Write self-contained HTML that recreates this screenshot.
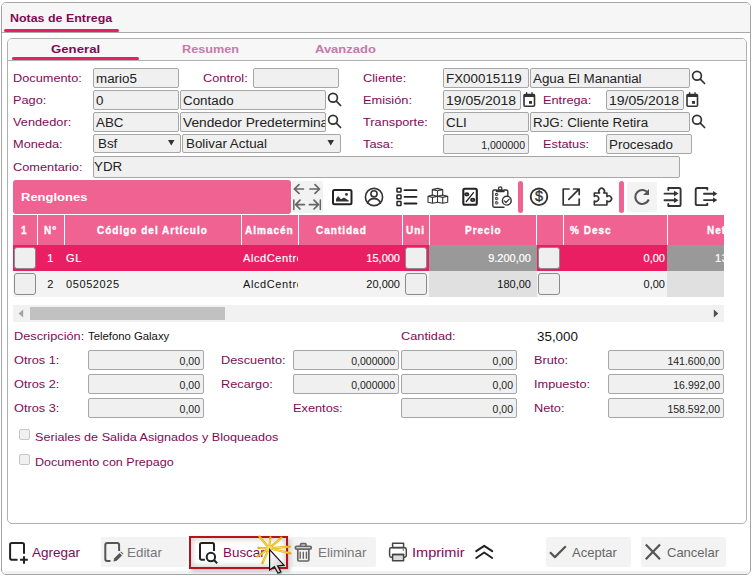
<!DOCTYPE html>
<html><head><meta charset="utf-8">
<style>
*{box-sizing:border-box;margin:0;padding:0}
html,body{width:754px;height:577px;overflow:hidden;background:#fff}
body{position:relative;font-family:"Liberation Sans",sans-serif;color:#222}
.a{position:absolute}
.lbl{position:absolute;font-size:11px;line-height:20px;height:20px;color:#7f0a55;white-space:nowrap;transform:scaleX(1.16);transform-origin:0 0}
.inp{position:absolute;height:20px;border:1px solid #a6a6a6;border-radius:2px;background:#f0f0f0;font-size:12.5px;line-height:20px;padding-left:2px;color:#222;white-space:nowrap;overflow:hidden}
.num{text-align:right;padding-right:3px;font-size:10.5px}
.inp i{font-style:normal;display:inline-block;transform:scaleX(1.07);transform-origin:0 0}
.ico{position:absolute;overflow:visible}
.th{position:absolute;top:223px;font-size:10px;font-weight:bold;color:#fff;line-height:16px;white-space:nowrap;letter-spacing:1px;-webkit-text-stroke:.35px #fff}
.cb{position:absolute;width:22px;height:22px;border:1px solid #8a8a8a;border-radius:3px;background:#efefef}
.td{position:absolute;height:26px;line-height:26px;font-size:11px;color:#111;white-space:nowrap;letter-spacing:.6px}
.td.w{color:#fff;-webkit-text-stroke:.2px #fff}
.btxt{position:absolute;top:544px;font-size:13px;line-height:18px;white-space:nowrap;transform-origin:0 0}
</style></head><body>

<!-- outer panel -->
<div class="a" style="left:1px;top:2px;width:750px;height:573px;border:1px solid #a4a4a4;border-radius:5px;background:#fff;overflow:hidden">
  <div class="a" style="left:0;top:0;width:748px;height:30px;background:#f6f6f6;border-bottom:1px solid #a9a9a9"></div>
  <div class="a" style="left:2px;top:26px;width:115px;height:3px;background:#e91e63;border-radius:2px"></div>
  <div class="a" style="left:0;top:568px;width:748px;height:4px;background:#eff3f6"></div>
</div>
<div class="a" style="left:10px;top:10px;font-size:11px;font-weight:bold;color:#7f0a55;line-height:16px;transform:scaleX(1.13);transform-origin:0 0">Notas de Entrega</div>

<!-- inner panel -->
<div class="a" style="left:7px;top:38px;width:740px;height:486px;border:1px solid #b0b0b0;border-radius:5px;background:#fff;overflow:hidden">
  <div class="a" style="left:0;top:0;width:738px;height:22px;background:#f7f7f7;border-bottom:1px solid #b0b0b0"></div>
  <div class="a" style="left:4px;top:18px;width:127px;height:3px;background:#e91e63;border-radius:2px"></div>
</div>
<div class="a" style="left:51px;top:41px;font-size:11px;font-weight:bold;color:#7f0a55;line-height:16px;transform:scaleX(1.2);transform-origin:0 0">General</div>
<div class="a" style="left:182px;top:41px;font-size:11px;font-weight:bold;color:#c878aa;line-height:16px;transform:scaleX(1.15);transform-origin:0 0">Resumen</div>
<div class="a" style="left:315px;top:41px;font-size:11px;font-weight:bold;color:#c878aa;line-height:16px;transform:scaleX(1.18);transform-origin:0 0">Avanzado</div>

<!-- form row 1 -->
<div class="lbl" style="left:13px;top:68px">Documento:</div>
<div class="inp" style="left:93px;top:68px;width:86px"><i>mario5</i></div>
<div class="lbl" style="left:203px;top:68px">Control:</div>
<div class="inp" style="left:253px;top:68px;width:86px"></div>
<div class="lbl" style="left:363px;top:68px">Cliente:</div>
<div class="inp" style="left:443px;top:68px;width:86px"><i>FX00015119</i></div>
<div class="inp" style="left:530px;top:68px;width:160px"><i>Agua El Manantial</i></div>

<!-- row 2 -->
<div class="lbl" style="left:13px;top:90px">Pago:</div>
<div class="inp" style="left:93px;top:90px;width:86px"><i>0</i></div>
<div class="inp" style="left:180px;top:90px;width:146px"><i>Contado</i></div>
<div class="lbl" style="left:363px;top:90px">Emisión:</div>
<div class="inp" style="left:443px;top:90px;width:78px"><i style="transform:scaleX(1.12)">19/05/2018</i></div>
<div class="lbl" style="left:543px;top:90px">Entrega:</div>
<div class="inp" style="left:606px;top:90px;width:78px"><i style="transform:scaleX(1.12)">19/05/2018</i></div>

<!-- row 3 -->
<div class="lbl" style="left:13px;top:112px">Vendedor:</div>
<div class="inp" style="left:93px;top:112px;width:86px"><i>ABC</i></div>
<div class="inp" style="left:180px;top:112px;width:146px"><i style="transform:scaleX(1.1)">Vendedor Predetermina</i></div>
<div class="lbl" style="left:363px;top:112px">Transporte:</div>
<div class="inp" style="left:443px;top:112px;width:86px"><i>CLI</i></div>
<div class="inp" style="left:530px;top:112px;width:160px"><i>RJG: Cliente Retira</i></div>

<!-- row 4 -->
<div class="lbl" style="left:13px;top:134px">Moneda:</div>
<div class="inp" style="left:93px;top:134px;width:88px;height:19px;line-height:18px;padding-left:4px"><i>Bsf</i></div>
<div class="inp" style="left:182px;top:134px;width:159px;height:19px;line-height:18px;padding-left:3px"><i>Bolivar Actual</i></div>
<div class="lbl" style="left:363px;top:134px">Tasa:</div>
<div class="inp num" style="left:443px;top:134px;width:86px">1,000000</div>
<div class="lbl" style="left:543px;top:134px">Estatus:</div>
<div class="inp" style="left:606px;top:134px;width:86px"><i>Procesado</i></div>

<!-- row 5 -->
<div class="lbl" style="left:13px;top:157px">Comentario:</div>
<div class="inp" style="left:93px;top:156px;width:587px;height:22px;line-height:20px;padding-left:0"><i>YDR</i></div>


<!-- renglones bar -->
<div class="a" style="left:13px;top:180px;width:278px;height:34px;background:#f06292;border-radius:3px"></div>
<div class="a" style="left:21px;top:189px;font-size:11.5px;font-weight:bold;color:#fff;line-height:16px;transform:scaleX(1.13);transform-origin:0 0">Renglones</div>

<!-- header row -->
<div class="a" style="left:13px;top:215px;width:711px;height:30px;background:#f06292"></div>
<div class="a" style="left:13px;top:245px;width:711px;height:26px;background:#e91e63"></div>
<div class="a" style="left:13px;top:271px;width:711px;height:26px;background:#f3f3f3"></div>
<div class="a" style="left:429px;top:245px;width:108px;height:26px;background:#999"></div>
<div class="a" style="left:667px;top:245px;width:57px;height:26px;background:#999"></div>
<div class="a" style="left:429px;top:271px;width:108px;height:26px;background:#e0e0e0"></div>
<div class="a" style="left:667px;top:271px;width:57px;height:26px;background:#e0e0e0"></div>
<div class="a" style="left:37px;top:215px;width:1px;height:30px;background:#fff"></div>
<div class="a" style="left:64px;top:215px;width:1px;height:30px;background:#fff"></div>
<div class="a" style="left:241px;top:215px;width:1px;height:30px;background:#fff"></div>
<div class="a" style="left:298px;top:215px;width:1px;height:30px;background:#fff"></div>
<div class="a" style="left:402px;top:215px;width:1px;height:30px;background:#fff"></div>
<div class="a" style="left:429px;top:215px;width:1px;height:30px;background:#fff"></div>
<div class="a" style="left:536px;top:215px;width:1px;height:30px;background:#fff"></div>
<div class="a" style="left:563px;top:215px;width:1px;height:30px;background:#fff"></div>
<div class="a" style="left:667px;top:215px;width:1px;height:30px;background:#fff"></div>

<div class="th" style="left:21px">1</div>
<div class="th" style="left:44px">N°</div>
<div class="th" style="left:97px">Código del Artículo</div>
<div class="th" style="left:245px">Almacén</div>
<div class="th" style="left:316px">Cantidad</div>
<div class="th" style="left:406px">Uni</div>
<div class="th" style="left:465px">Precio</div>
<div class="th" style="left:570px">% Desc</div>
<div class="th" style="left:707px;width:17px;overflow:hidden">Neto</div>

<div class="cb" style="left:14px;top:247px"></div>
<div class="cb" style="left:14px;top:273px"></div>
<div class="cb" style="left:405px;top:247px"></div>
<div class="cb" style="left:405px;top:273px"></div>
<div class="cb" style="left:538px;top:247px"></div>
<div class="cb" style="left:538px;top:273px"></div>

<div class="td w" style="left:38px;top:245px;width:16px;text-align:right">1</div>
<div class="td w" style="left:66px;top:245px">GL</div>
<div class="td w" style="left:243px;top:245px;width:55px;overflow:hidden">AlcdCentro</div>
<div class="td w" style="left:340px;top:245px;width:60px;text-align:right;letter-spacing:0">15,000</div>
<div class="td w" style="left:470px;top:245px;width:61px;text-align:right;letter-spacing:0">9.200,00</div>
<div class="td w" style="left:600px;top:245px;width:65px;text-align:right;letter-spacing:0">0,00</div>
<div class="td w" style="left:715px;top:245px;width:9px;overflow:hidden">13</div>

<div class="td" style="left:38px;top:271px;width:16px;text-align:right">2</div>
<div class="td" style="left:66px;top:271px">05052025</div>
<div class="td" style="left:243px;top:271px;width:55px;overflow:hidden">AlcdCentro</div>
<div class="td" style="left:340px;top:271px;width:60px;text-align:right;letter-spacing:0">20,000</div>
<div class="td" style="left:470px;top:271px;width:61px;text-align:right;letter-spacing:0">180,00</div>
<div class="td" style="left:600px;top:271px;width:65px;text-align:right;letter-spacing:0">0,00</div>

<!-- scrollbar -->
<div class="a" style="left:13px;top:305px;width:711px;height:17px;background:#f1f1f1"></div>
<div class="a" style="left:30px;top:307px;width:195px;height:13px;background:#c1c1c1"></div>


<!-- bottom section -->
<div class="lbl" style="left:14px;top:326px">Descripción:</div>
<div class="lbl" style="left:88px;top:326px;color:#111;transform:scaleX(1.03)">Telefono Galaxy</div>
<div class="lbl" style="left:401px;top:326px">Cantidad:</div>
<div class="a" style="left:537px;top:327px;font-size:13px;line-height:20px;color:#111;transform:scaleX(1.03);transform-origin:0 0">35,000</div>

<div class="lbl" style="left:14px;top:350px">Otros 1:</div>
<div class="inp num" style="left:88px;top:350px;width:116px">0,00</div>
<div class="lbl" style="left:221px;top:350px">Descuento:</div>
<div class="inp num" style="left:293px;top:350px;width:106px">0,000000</div>
<div class="inp num" style="left:401px;top:350px;width:116px">0,00</div>
<div class="lbl" style="left:534px;top:350px">Bruto:</div>
<div class="inp num" style="left:608px;top:350px;width:116px">141.600,00</div>

<div class="lbl" style="left:14px;top:374px">Otros 2:</div>
<div class="inp num" style="left:88px;top:374px;width:116px">0,00</div>
<div class="lbl" style="left:221px;top:374px">Recargo:</div>
<div class="inp num" style="left:293px;top:374px;width:106px">0,000000</div>
<div class="inp num" style="left:401px;top:374px;width:116px">0,00</div>
<div class="lbl" style="left:534px;top:374px">Impuesto:</div>
<div class="inp num" style="left:608px;top:374px;width:116px">16.992,00</div>

<div class="lbl" style="left:14px;top:398px">Otros 3:</div>
<div class="inp num" style="left:88px;top:398px;width:116px">0,00</div>
<div class="lbl" style="left:293px;top:398px">Exentos:</div>
<div class="inp num" style="left:401px;top:398px;width:116px">0,00</div>
<div class="lbl" style="left:534px;top:398px">Neto:</div>
<div class="inp num" style="left:608px;top:398px;width:116px">158.592,00</div>

<div class="a" style="left:19px;top:429px;width:11px;height:11px;border:1px solid #c6c6c6;border-radius:2px;background:#f0f0f0"></div>
<div class="lbl" style="left:35px;top:427px;transform:scaleX(1.147)">Seriales de Salida Asignados y Bloqueados</div>
<div class="a" style="left:19px;top:454px;width:11px;height:11px;border:1px solid #c6c6c6;border-radius:2px;background:#f0f0f0"></div>
<div class="lbl" style="left:35px;top:452px;transform:scaleX(1.14)">Documento con Prepago</div>

<!-- footer buttons -->
<div class="a" style="left:101px;top:537px;width:86px;height:30px;background:#f3f3f3;border-radius:2px"></div>
<div class="a" style="left:291px;top:537px;width:85px;height:30px;background:#f3f3f3;border-radius:2px"></div>
<div class="a" style="left:546px;top:537px;width:85px;height:30px;background:#f3f3f3;border-radius:2px"></div>
<div class="a" style="left:641px;top:537px;width:85px;height:30px;background:#f3f3f3;border-radius:2px"></div>
<div class="a" style="left:189px;top:536px;width:99px;height:33px;border:2px solid #b5121b;box-shadow:inset 0 0 5px 2px rgba(0,0,0,.16), 2px 2px 4px rgba(0,0,0,.25)"></div>

<div class="btxt" style="left:32px;color:#7f0a55;transform:scaleX(1.04)">Agregar</div>
<div class="btxt" style="left:127px;color:#777;transform:scaleX(1.03)">Editar</div>
<div class="btxt" style="left:223px;color:#7f0a55;transform:scaleX(1.03)">Buscar</div>
<div class="btxt" style="left:318px;color:#777;transform:scaleX(1.03)">Eliminar</div>
<div class="btxt" style="left:412px;color:#7f0a55;transform:scaleX(1.12)">Imprimir</div>
<div class="btxt" style="left:572px;color:#666">Aceptar</div>
<div class="btxt" style="left:667px;color:#666">Cancelar</div>


<!-- icons overlay -->
<svg class="a" style="left:0;top:0" width="754" height="577" viewBox="0 0 754 577" fill="none" stroke-linecap="round" stroke-linejoin="round">
 <path d="M18.6,313.5 L23.2,309.6 V317.4 Z" fill="#a3a3a3"/>
 <path d="M718.3,313.5 L713.8,309.6 V317.4 Z" fill="#505050"/>
 <!-- select arrows -->
 <path d="M168,140 H174.5 L171.25,145.5 Z" fill="#333"/>
 <path d="M327.5,140 H334 L330.75,145.5 Z" fill="#333"/>
 <!-- search icons -->
 <g stroke="#333" stroke-width="1.7">
  <circle cx="333" cy="97.8" r="4.4"/><path d="M336.3,101.2 L340.6,105.5"/>
  <circle cx="333" cy="119.8" r="4.4"/><path d="M336.3,123.2 L340.6,127.5"/>
  <circle cx="697" cy="75.8" r="4.4"/><path d="M700.3,79.2 L704.6,83.5"/>
  <circle cx="697" cy="119.8" r="4.4"/><path d="M700.3,123.2 L704.6,127.5"/>
 </g>
 <!-- calendars -->
 <g>
  <rect x="524" y="94.5" width="10.5" height="11.8" rx="1" stroke="#333" stroke-width="1.6"/>
  <rect x="524" y="94.5" width="10.5" height="2.5" fill="#333"/>
  <path d="M526.6,92.8 V95 M532,92.8 V95" stroke="#333" stroke-width="1.4"/>
  <rect x="529" y="101" width="3" height="2.8" fill="#333"/>
  <rect x="687" y="94.5" width="10.5" height="11.8" rx="1" stroke="#333" stroke-width="1.6"/>
  <rect x="687" y="94.5" width="10.5" height="2.5" fill="#333"/>
  <path d="M689.6,92.8 V95 M695,92.8 V95" stroke="#333" stroke-width="1.4"/>
  <rect x="692" y="101" width="3" height="2.8" fill="#333"/>
 </g>

 <!-- toolbar: arrows box -->
 <rect x="292" y="181" width="31" height="32" rx="2" fill="#f2f2f2"/>
 <g stroke="#666" stroke-width="1.7">
  <path d="M294.3,189 H303.4 M299,184.6 L294.3,189 L299,193.4"/>
  <path d="M310,189 H319.5 M315,184.6 L319.5,189 L315,193.4"/>
  <path d="M293.8,200 V209.4" stroke-width="1.5"/>
  <path d="M295.6,204.6 H304.4 M300,200.2 L295.6,204.6 L300,209"/>
  <path d="M320.3,200 V209.4" stroke-width="1.5"/>
  <path d="M309.4,204.6 H318.5 M314,200.2 L318.5,204.6 L314,209"/>
 </g>
 <!-- image icon -->
 <rect x="333" y="190" width="18.5" height="14.3" rx="1.5" stroke="#222" stroke-width="2"/>
 <path d="M336,201.5 L336,199 L338,196 L341,199.3 L344,197.5 L348.7,200.5 L348.7,201.5 Z" fill="#333"/>
 <circle cx="346.5" cy="194.4" r="1.4" fill="#333"/>
 <!-- user -->
 <g stroke="#333" stroke-width="1.6">
  <circle cx="374" cy="197" r="8.6"/>
  <circle cx="374" cy="193.8" r="3.1"/>
  <path d="M367.6,203.2 Q369,198.6 374,198.6 Q379,198.6 380.4,203.2"/>
 </g>
 <!-- list -->
 <g stroke="#222" stroke-width="1.5">
  <rect x="397" y="188.3" width="4" height="3.8" rx=".5"/>
  <rect x="397" y="194.9" width="4" height="3.8" rx=".5"/>
  <rect x="397" y="201.6" width="4" height="3.8" rx=".5"/>
  <path d="M404.5,190.2 H416.5 M404.5,196.8 H416.5 M404.5,203.5 H416.5" stroke-width="1.8"/>
 </g>
 <!-- cubes -->
 <g stroke="#333" stroke-width="1.1">
  <path d="M432.3,189.6 L437.5,188.4 L442.7,189.6 L437.5,190.8 Z M432.3,189.6 V195.5 M437.5,190.8 V196.3 M442.7,189.6 V195.5"/>
  <path d="M428,196.2 L432.5,195 L437.5,196.2 L432.5,197.4 Z M428,196.2 V202.3 L432.5,203.3 L437.5,202.3 V196.2 M432.5,197.4 V203.3"/>
  <path d="M437.5,196.2 L442.7,195 L447.7,196.2 L442.7,197.4 Z M447.7,196.2 V202.3 L442.7,203.3 L437.5,202.3 M442.7,197.4 V203.3"/>
 </g>
 <!-- percent -->
 <rect x="463.3" y="188.7" width="13.5" height="16.1" rx="1.5" stroke="#222" stroke-width="2.1"/>
 <path d="M466.3,201.5 L473.5,192.6" stroke="#222" stroke-width="1.3"/>
 <ellipse cx="466.8" cy="194.3" rx="1.7" ry="1.2" stroke="#222" stroke-width="1.8"/>
 <ellipse cx="472.7" cy="199.9" rx="1.7" ry="1.2" stroke="#222" stroke-width="1.8"/>
 <!-- clipboard -->
 <g stroke="#333" stroke-width="1.4">
  <path d="M496,190 H494.3 Q492.8,190 492.8,191.5 V205.6 Q492.8,207.2 494.3,207.2 H504"/>
  <path d="M504.5,190 H506.3 Q507.8,190 507.8,191.5 V195.6"/>
  <circle cx="500.2" cy="188.6" r="1.7" stroke-width="1.3"/><path d="M496.5,191.6 V190.2 H504 V191.6 Z" fill="#333"/>
  <rect x="495.6" y="193.6" width="2.2" height="2" rx=".4" stroke-width="1"/>
  <rect x="495.6" y="197.7" width="2.2" height="2" rx=".4" stroke-width="1"/>
  <rect x="495.6" y="201.9" width="2.2" height="2" rx=".4" stroke-width="1"/>
  <circle cx="506.8" cy="200.7" r="4.4" fill="#fff"/>
  <path d="M504.3,200.8 L506,202.5 L509.2,199.2" stroke-width="1.2"/>
 </g>
 <!-- pink separators -->
 <rect x="518" y="181" width="5" height="32" rx="2.5" fill="#f06292"/>
 <rect x="619" y="181" width="5" height="32" rx="2.5" fill="#f06292"/>
 <!-- dollar -->
 <circle cx="539" cy="196.8" r="8.3" stroke="#333" stroke-width="1.9"/>
 <text x="539" y="201.3" font-family="Liberation Sans" font-size="14.5" text-anchor="middle" fill="#333" stroke="#333" stroke-width=".35">$</text>
 <!-- external -->
 <g stroke="#333" stroke-width="1.7">
  <path d="M569,189 H563.2 V205 H579.2 V199"/>
  <path d="M568.8,199.3 L579,189.2 M573.6,189 H579.2 V194.6"/>
 </g>
 <!-- puzzle -->
 <path d="M594.3,193 H599.6 A2.8,2.8 0 1 1 603.7,193 H606.9 V196.6 A2.8,2.8 0 1 1 606.9,200.8 V205 H594.3 V201 A2.8,2.8 0 1 0 594.3,196.4 Z" stroke="#333" stroke-width="1.6"/>
 <!-- refresh -->
 <rect x="627" y="182" width="30" height="30" rx="2" fill="#f3f3f3"/>
 <path d="M648.2,193.2 A7,7 0 1 0 648.8,199.5" stroke="#555" stroke-width="2.1" stroke-linecap="butt"/>
 <path d="M649,189 V194.9 H643.1 Z" fill="#555"/>
 <!-- import -->
 <g stroke="#333" stroke-width="1.9">
  <path d="M668.3,190 V188 H679 Q680.6,188 680.6,189.6 V204.4 Q680.6,206 679,206 H668.3 V204"/>
  <path d="M664.5,193.6 H675 M664.5,200.3 H675"/>
 </g>
 <path d="M674,190.8 L678.6,193.6 L674,196.4 Z M674,197.5 L678.6,200.3 L674,203.1 Z" fill="#333"/>
 <!-- export -->
 <g stroke="#333" stroke-width="1.9">
  <path d="M707.3,189.6 V188 H697.4 Q695.7,188 695.7,189.7 V203.4 Q695.7,205.1 697.4,205.1 H707.3 V203.6"/>
  <path d="M704,193.7 H714 M704,200.1 H714"/>
 </g>
 <path d="M713,191 L717.4,193.7 L713,196.4 Z M713,197.4 L717.4,200.1 L713,202.8 Z" fill="#333"/>

 <!-- footer icons -->
 <g stroke="#222" stroke-width="2" stroke-linecap="butt">
  <path d="M17.6,559.8 H11.8 Q10.1,559.8 10.1,558.1 V544.6 Q10.1,542.9 11.8,542.9 H22.3 Q24,542.9 24,544.6 V553.7"/>
  <path d="M20.1,559.8 H27.8 M24,556.2 V563.7"/>
 </g>
 <g stroke="#555" stroke-width="2" stroke-linecap="butt">
  <path d="M110.5,561 H107.3 Q105.3,561 105.3,559 V544.9 Q105.3,542.9 107.3,542.9 H117.1 Q119.1,542.9 119.1,544.9 V551"/>
  <path d="M113.4,561.6 L114.3,558.3 L119.6,553 L122,555.4 L116.7,560.7 Z" fill="#555" stroke="none"/><path d="M120.4,552.2 L121.1,551.5 L123.5,553.9 L122.8,554.6 Z" fill="#555" stroke="none"/>
 </g>
 <g stroke="#222" stroke-width="2" stroke-linecap="butt">
  <path d="M204.9,559.8 H201.7 Q200,559.8 200,558.1 V544.6 Q200,542.9 201.7,542.9 H212.3 Q214,542.9 214,544.6 V551"/>
  <circle cx="210.9" cy="557" r="4.2"/>
  <path d="M213.9,560 L217.2,563.3"/>
 </g>
 <g stroke="#666" stroke-width="1.7">
  <rect x="295.3" y="546.4" width="16" height="2.8" rx="1.4"/>
  <path d="M300.6,546.2 V544.6 Q300.6,543.6 301.6,543.6 H305 Q306,543.6 306,544.6 V546.2"/>
  <path d="M297.8,549.5 V559.8 Q297.8,561 299,561 H307.6 Q308.8,561 308.8,559.8 V549.5"/>
  <path d="M300.2,552.2 V558.2 M303.3,552.2 V558.2 M306.4,552.2 V558.2" stroke-width="1.4"/>
 </g>
 <g stroke="#444" stroke-width="1.5">
  <rect x="392.6" y="543.2" width="11" height="4.4"/>
  <path d="M392.2,557.2 H391.3 Q389.6,557.2 389.6,555.5 V549.4 Q389.6,547.7 391.3,547.7 H404.6 Q406.3,547.7 406.3,549.4 V555.5 Q406.3,557.2 404.6,557.2 H403.8"/>
  <rect x="392.6" y="554.6" width="11" height="6.2" fill="#ddd"/>
  <path d="M392.6,554.6 H403.6" stroke-width="1.5"/>
 </g>
 <circle cx="403.3" cy="550" r=".8" fill="#555"/>
 <g stroke="#222" stroke-width="2">
  <path d="M476.2,551.2 L484.2,545.8 L492.2,551.2"/>
  <path d="M476.2,558 L484.2,552.5 L492.2,558"/>
 </g>
 <path d="M550,552.3 L554.9,557.1 L565.8,546.2" stroke="#555" stroke-width="2.2" stroke-linecap="butt"/>
 <path d="M645.8,544.6 L660,559.2 M660,544.6 L645.8,559.2" stroke="#555" stroke-width="2.2" stroke-linecap="butt"/>

 <!-- starburst -->
 <g stroke="#eeb000" stroke-width="2.2" stroke-linecap="round">
  <path d="M269.2,548.3 L259.4,536.5 M269.2,548.3 L270.4,537.3 M269.2,548.3 L281.4,537.7 M269.2,548.3 L290,546.7 M269.2,548.3 L290.5,553.4 M269.2,548.3 L258.3,547.9 M269.2,548.3 L257.5,556.3 M269.2,548.3 L262.4,563.2"/>
 </g>
 <g stroke="#fbe27a" stroke-width=".8" stroke-linecap="round">
  <path d="M269.2,548.3 L261,538.5 M269.2,548.3 L270.2,539.5 M269.2,548.3 L279.5,539.5 M269.2,548.3 L287,546.9 M269.2,548.3 L287.5,552.7 M269.2,548.3 L260.5,548 M269.2,548.3 L259.5,555.3 M269.2,548.3 L263.5,561.3"/>
 </g>
 <circle cx="269.2" cy="548.3" r="2.5" fill="#f7e060"/>
 <!-- cursor -->
 <path d="M270.5,551 L271,571 L276,567.6 L279.5,574.5 L282.5,573 L279.2,566.6 L285.5,566.2 Z" fill="rgba(0,0,0,.25)" stroke="none"/>
 <defs><linearGradient id="cg" x1="0" y1="0" x2="1" y2="1"><stop offset="0" stop-color="#fff"/><stop offset="1" stop-color="#c8c8c8"/></linearGradient></defs>
 <path d="M269.6,549.6 L269.6,570 L274.4,566.6 L278,573.3 L280.8,571.8 L277.6,565.9 L284,565.2 Z" fill="url(#cg)" stroke="#111" stroke-width="1.2" stroke-linejoin="miter"/>
</svg>

</body></html>
